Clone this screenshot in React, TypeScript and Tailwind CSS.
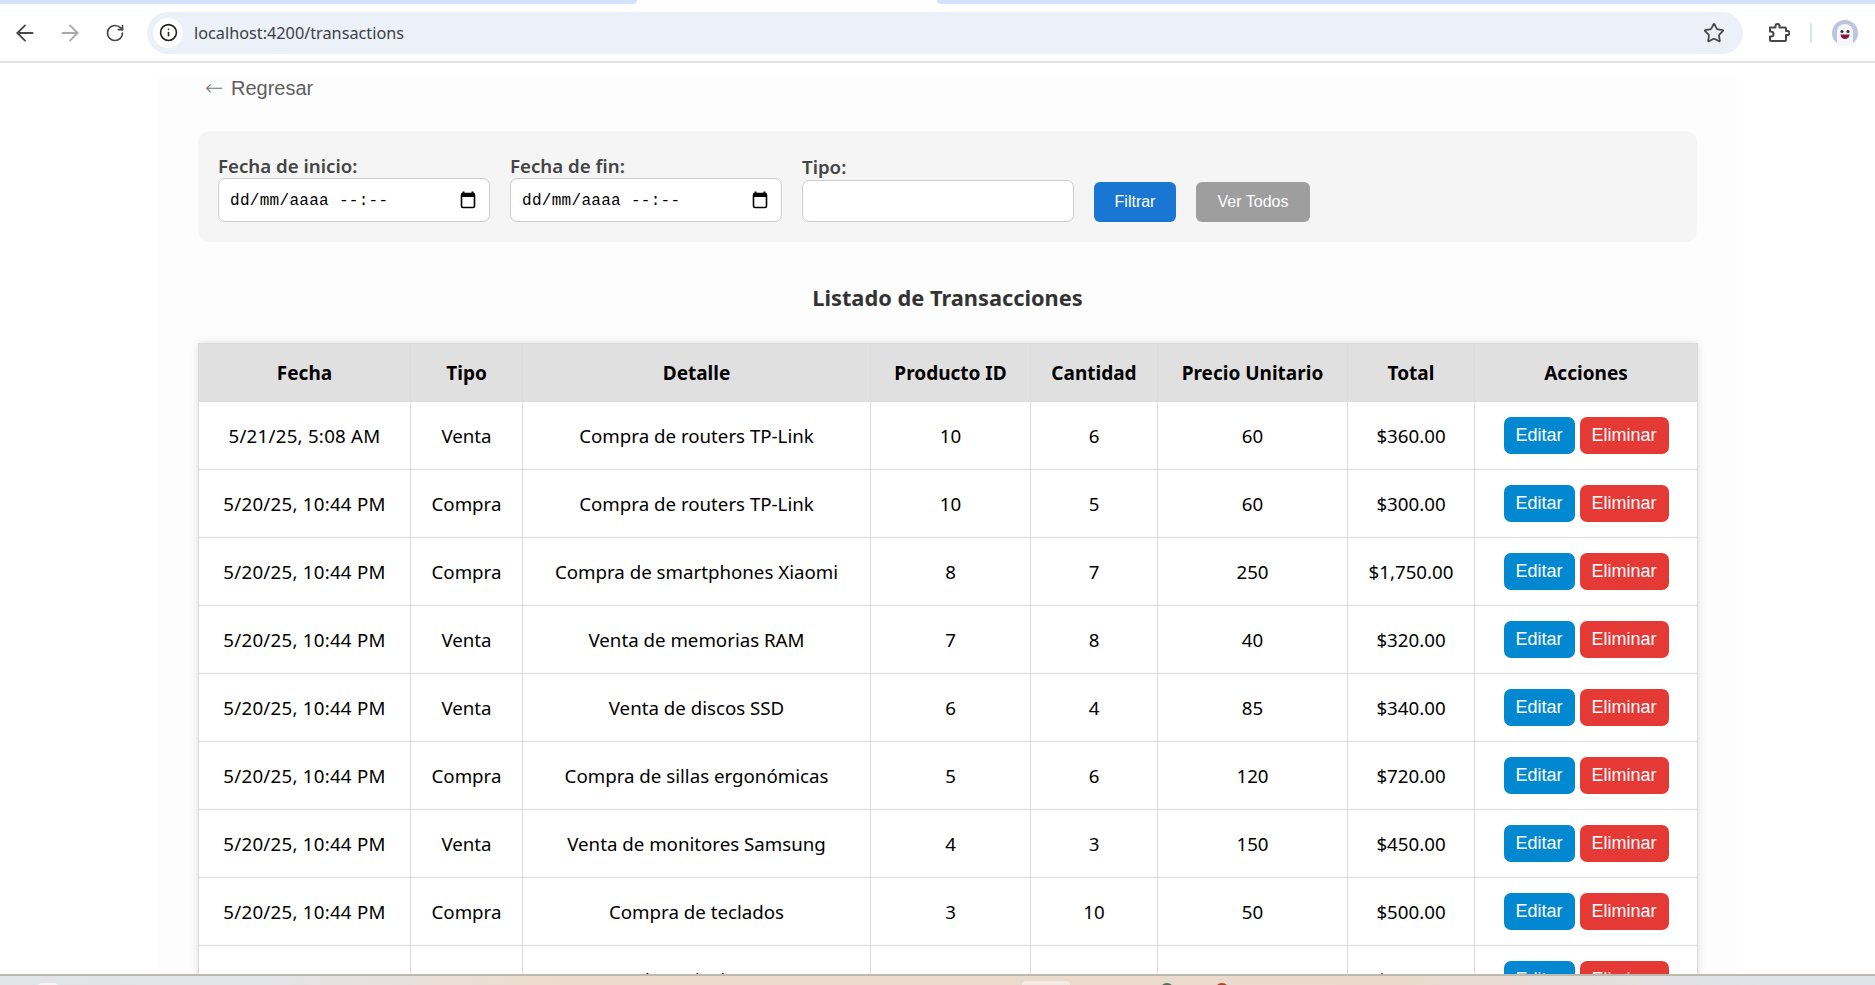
import React from 'react';
import { ArrowLeft, ArrowRight, RotateCw, Info, Star } from 'lucide-react';

interface Transaction {
  fecha: string;
  tipo: string;
  detalle: string;
  productoId: number;
  cantidad: number;
  precio: number;
  total: string;
}

const transactions: Transaction[] = [
  { fecha: '5/21/25, 5:08 AM', tipo: 'Venta', detalle: 'Compra de routers TP-Link', productoId: 10, cantidad: 6, precio: 60, total: '$360.00' },
  { fecha: '5/20/25, 10:44 PM', tipo: 'Compra', detalle: 'Compra de routers TP-Link', productoId: 10, cantidad: 5, precio: 60, total: '$300.00' },
  { fecha: '5/20/25, 10:44 PM', tipo: 'Compra', detalle: 'Compra de smartphones Xiaomi', productoId: 8, cantidad: 7, precio: 250, total: '$1,750.00' },
  { fecha: '5/20/25, 10:44 PM', tipo: 'Venta', detalle: 'Venta de memorias RAM', productoId: 7, cantidad: 8, precio: 40, total: '$320.00' },
  { fecha: '5/20/25, 10:44 PM', tipo: 'Venta', detalle: 'Venta de discos SSD', productoId: 6, cantidad: 4, precio: 85, total: '$340.00' },
  { fecha: '5/20/25, 10:44 PM', tipo: 'Compra', detalle: 'Compra de sillas ergonómicas', productoId: 5, cantidad: 6, precio: 120, total: '$720.00' },
  { fecha: '5/20/25, 10:44 PM', tipo: 'Venta', detalle: 'Venta de monitores Samsung', productoId: 4, cantidad: 3, precio: 150, total: '$450.00' },
  { fecha: '5/20/25, 10:44 PM', tipo: 'Compra', detalle: 'Compra de teclados', productoId: 3, cantidad: 10, precio: 50, total: '$500.00' },
  { fecha: '5/20/25, 10:44 PM', tipo: 'Venta', detalle: 'Venta de auriculares Sony', productoId: 2, cantidad: 9, precio: 70, total: '$630.00' },
];

const columns = [
  { label: 'Fecha', width: 'w-[212px]' },
  { label: 'Tipo', width: 'w-[112px]' },
  { label: 'Detalle', width: 'w-[348px]' },
  { label: 'Producto ID', width: 'w-[160px]' },
  { label: 'Cantidad', width: 'w-[127px]' },
  { label: 'Precio Unitario', width: 'w-[190px]' },
  { label: 'Total', width: 'w-[127px]' },
  { label: 'Acciones', width: 'w-[223px]' },
];

const PuzzleIcon = () => (
  <svg width="22" height="22" viewBox="0 0 22 22" fill="none" stroke="#474747" strokeWidth="2" strokeLinejoin="round">
    <path d="M2 5.5h5.5V4a2 2 0 0 1 4 0v1.5H17a1 1 0 0 1 1 1V9h1.5a2 2 0 0 1 0 4H18v5a1 1 0 0 1-1 1H3a1 1 0 0 1-1-1v-3.5h1a2.5 2.5 0 0 0 0-5H2z" />
  </svg>
);

const Avatar = () => (
  <svg width="26" height="26" viewBox="0 0 26 26">
    <circle cx="13" cy="13" r="13" fill="#bcc5e0" />
    <path d="M5 26V12a8 8 0 0 1 16 0v14z" fill="#f7f7fb" />
    <circle cx="10" cy="11.5" r="1.6" fill="#333" />
    <circle cx="16" cy="11.5" r="1.6" fill="#333" />
    <path d="M8.5 14.5h9a4.5 4.5 0 0 1-9 0z" fill="#8a1538" />
  </svg>
);

const CalendarIcon = () => (
  <svg width="16" height="18" viewBox="0 0 16 18" fill="none" className="shrink-0">
    <path d="M3.5 0.5v2M12.5 0.5v2" stroke="#000" strokeWidth="2" />
    <rect x="1.5" y="2.5" width="13" height="14" rx="1.5" stroke="#000" strokeWidth="1.6" />
    <rect x="1.5" y="2.5" width="13" height="3.5" fill="#000" />
  </svg>
);

const DateField = ({ label }: { label: string }) => (
  <div className="flex flex-col">
    <label className="text-[18.7px] leading-[24px] font-semibold text-[#444]">{label}</label>
    <div className="flex items-center justify-between w-[272px] h-[44px] bg-white border border-[#ccc] rounded-[7px] pl-[11px] pr-[13px]">
      <span className="font-['Liberation_Mono',monospace] text-[16px] leading-[26px] pt-[1px] tracking-[0.3px] text-black">dd/mm/aaaa --:--</span>
      <CalendarIcon />
    </div>
  </div>
);

export default function App() {
  return (
    <div className="flex flex-col h-[985px] overflow-hidden bg-white font-['Noto_Sans',sans-serif]">
      {/* Browser chrome */}
      <div className="flex h-[4px] shrink-0">
        <div className="w-[637px] bg-[#d3e3fd] rounded-br-[4px]" />
        <div className="w-[300px] bg-white" />
        <div className="flex-1 bg-[#d3e3fd] rounded-bl-[4px]" />
      </div>
      <div className="flex items-center h-[59px] shrink-0 bg-white pl-[2px] pr-[17px] border-b-2 border-[#e1e1e1]">
        <div className="flex justify-center w-[45px]"><ArrowLeft size={26} strokeWidth={1.7} className="text-[#474747]" /></div>
        <div className="flex justify-center w-[45px]"><ArrowRight size={26} strokeWidth={1.7} className="text-[#a9a9a9]" /></div>
        <div className="flex justify-center w-[45px]"><RotateCw size={20} strokeWidth={2} className="text-[#474747]" /></div>
        <div className="flex items-center flex-1 h-[42px] ml-[10px] bg-[#ebf0f9] rounded-full pl-[6px] pr-[18px]">
          <div className="flex items-center justify-center w-[30px] h-[30px] rounded-full bg-white">
            <Info size={19} strokeWidth={2} className="text-[#1f1f1f]" />
          </div>
          <span className="ml-[11px] pt-[2px] text-[16.25px] text-[#3d4043]">localhost:4200/transactions</span>
          <Star size={22} strokeWidth={1.9} className="ml-auto text-[#474747]" />
        </div>
        <div className="ml-[25px] flex items-center"><PuzzleIcon /></div>
        <div className="ml-[20px] w-[2px] h-[20px] bg-[#d3e3fd]" />
        <div className="ml-[20px] flex items-center"><Avatar /></div>
      </div>

      {/* Page */}
      <main className="flex-1 min-h-0 overflow-hidden pl-[158px]">
        <div className="w-[1579px] h-full px-[40px] bg-[#fdfdfd]">
          <a href="#" className="flex items-center mt-[13px] ml-[7px] font-['Liberation_Sans',sans-serif] text-[20px] leading-[24px] text-[#5f5f5f] no-underline">
            <span className="font-['DejaVu_Sans',sans-serif] font-light text-[22px] text-[#777] w-[26px]">←</span>
            Regresar
          </a>

          <div className="flex items-end gap-[20px] mt-[31px] h-[111px] bg-[#f5f5f5] rounded-[12px] px-[20px] pb-[20px]">
            <DateField label="Fecha de inicio:" />
            <DateField label="Fecha de fin:" />
            <div className="flex flex-col">
              <label className="text-[18.7px] leading-[24px] font-semibold text-[#444] mb-[1px]">Tipo:</label>
              <div className="w-[272px] h-[42px] bg-white border border-[#ccc] rounded-[7px]" />
            </div>
            <button className="h-[40px] w-[82px] bg-[#1976d2] text-white rounded-[6px] font-['Liberation_Sans',sans-serif] text-[16px]">Filtrar</button>
            <button className="h-[40px] w-[114px] bg-[#9e9e9e] text-white rounded-[6px] font-['Liberation_Sans',sans-serif] text-[16px]">Ver Todos</button>
          </div>

          <h2 className="mt-[41px] mb-[30px] text-center text-[21.8px] leading-[30px] font-bold text-[#333]">Listado de Transacciones</h2>

          <table className="w-[1499px] table-fixed border-collapse bg-white shadow-[0_0_8px_rgba(0,0,0,0.12)]">
            <thead>
              <tr className="h-[58px] bg-[#e0e0e0]">
                {columns.map((col) => (
                  <th key={col.label} className={`${col.width} border border-[#dcdcdc] pt-[1px] text-[19px] font-bold text-black text-center`}>
                    {col.label}
                  </th>
                ))}
              </tr>
            </thead>
            <tbody>
              {transactions.map((t, i) => (
                <tr key={i} className="h-[68px]">
                  <td className="border border-[#dcdcdc] pt-[2px] text-[18.7px] tracking-[0.25px] text-black text-center">{t.fecha}</td>
                  <td className="border border-[#dcdcdc] pt-[2px] text-[18.7px] text-black text-center">{t.tipo}</td>
                  <td className="border border-[#dcdcdc] pt-[2px] text-[18.7px] text-black text-center">{t.detalle}</td>
                  <td className="border border-[#dcdcdc] pt-[2px] text-[18.7px] text-black text-center">{t.productoId}</td>
                  <td className="border border-[#dcdcdc] pt-[2px] text-[18.7px] text-black text-center">{t.cantidad}</td>
                  <td className="border border-[#dcdcdc] pt-[2px] text-[18.7px] text-black text-center">{t.precio}</td>
                  <td className="border border-[#dcdcdc] pt-[2px] text-[18.7px] text-black text-center">{t.total}</td>
                  <td className="border border-[#dcdcdc] text-center">
                    <div className="flex justify-center gap-[5px] -mt-[1px]">
                      <button className="w-[71px] h-[37px] bg-[#0288d1] text-white rounded-[7px] font-['Liberation_Sans',sans-serif] text-[18px]">Editar</button>
                      <button className="w-[89px] h-[37px] bg-[#e53935] text-white rounded-[7px] font-['Liberation_Sans',sans-serif] text-[18px]">Eliminar</button>
                    </div>
                  </td>
                </tr>
              ))}
            </tbody>
          </table>
        </div>
      </main>

      {/* Desktop strip below the window, taskbar items barely peek in */}
      <div className="flex h-[11px] shrink-0 overflow-hidden border-t-2 border-[#bdb8b0] bg-[linear-gradient(90deg,#e0e5e6_0%,#e4e4e6_15%,#eddccc_30%,#e9dacd_75%,#dfe4ec_95%)] pl-[36px]">
        <div className="w-[24px] h-[6px] mt-[7px] rounded-t-full bg-[#f6f6f4]" />
        <div className="w-[48px] h-[8px] mt-[5px] ml-[962px] rounded-t-[4px] bg-[#f3eae2]" />
        <div className="w-[14px] h-[14px] mt-[7px] ml-[90px] rounded-full bg-[#5c6b58]" />
        <div className="w-[14px] h-[14px] mt-[7px] ml-[41px] rounded-full bg-[#b5402a]" />
      </div>
    </div>
  );
}
